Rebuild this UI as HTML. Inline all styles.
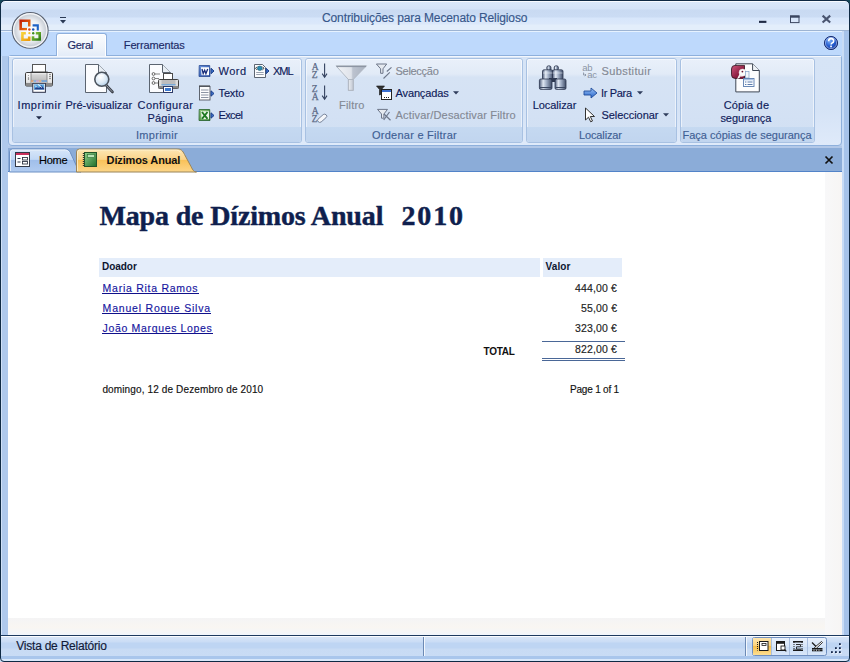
<!DOCTYPE html>
<html><head><meta charset="utf-8">
<style>
*{margin:0;padding:0;box-sizing:border-box}
html,body{width:850px;height:662px;overflow:hidden;background:#16495a}
body{position:relative;font-family:"Liberation Sans",sans-serif;font-size:11px;color:#1c2a66}
.a{position:absolute}
.t{position:absolute;white-space:pre;line-height:1;z-index:5;-webkit-text-stroke:0.15px currentColor}
svg{position:absolute;overflow:visible}
#frame{left:0;top:0;width:850px;height:662px;background:linear-gradient(90deg,#d0e1f7 1px,#d0e1f7 2px,#afc9ec 2px,#afc9ec 8px,#b9d0ee 8px,#b9d0ee 842px,#c8dcf6 842px,#c8dcf6 844px,#a6c3ea 844px);border-radius:7px 7px 0 0}
#frameo{left:0;top:0;width:850px;height:662px;border:1px solid #0f2a44;border-radius:5px 5px 4px 4px}
#title{left:1px;top:1px;width:848px;height:29px;border-radius:4px 4px 0 0;background:linear-gradient(#f8fbff 0,#f8fbff 1px,#dae8fa 1px,#d4e3f7 8px,#c9daf2 9px,#cbdcf4 16px,#d7e6fb 17px,#dbe8fa 23px,#e3eefb 24px,#e3eefb 29px)}
#titleline{left:1px;top:30px;width:848px;height:1px;background:#9db4d3}
#tabrow{left:1px;top:31px;width:841px;height:25px;background:#bed9fc;border-top:1px solid #e6f2ff}
#ribbon{left:8px;top:55px;width:834px;height:91px;background:linear-gradient(#d6e4f6 0,#d5e3f6 60%,#dfeafa 100%);border:1px solid #8eb0dc;border-radius:3px 3px 4px 4px}
#ribin{left:9px;top:56px;width:832px;height:1px;background:#f3f7fd}
.grp{position:absolute;top:58px;height:85px;border:1px solid #a8c1e2;border-radius:3px;background:linear-gradient(#e9f0fa 0,#e2ebf7 18%,#d6e3f4 22%,#d3e1f4 70%,#d0dff2 100%)}
.grp:before{content:"";position:absolute;left:0;top:0;right:0;bottom:0;border:1px solid rgba(255,255,255,.55);border-radius:2px}
.grp .lbl{position:absolute;left:0;right:0;bottom:0;height:15px;background:linear-gradient(#c5d9f1,#c1d5ef);border-radius:0 0 2px 2px}
#doctabs{left:8px;top:146px;width:834px;height:26px;background:#8bacd8;border-bottom:1px solid #5283c8}
#doctabsTop{left:8px;top:146px;width:834px;height:2px;background:#b2c8e8}
#content{left:8px;top:172px;width:817px;height:446px;background:#fff}
#rgray{left:825px;top:172px;width:17px;height:463px;background:linear-gradient(90deg,#f8f8f9,#f7f5f4)}
#bgray{left:8px;top:618px;width:817px;height:17px;background:linear-gradient(#f4f4f5 0,#f9f6f2 55%,#f1f6fc 100%)}
#status{left:1px;top:635px;width:848px;height:26px;border-radius:0 0 3px 3px;border-top:1px solid #1c3a60;background:linear-gradient(#fafcff 0,#fafcff 1px,#d6e5f8 1px,#cadcf5 6px,#bed5f3 7px,#bed5f3 12px,#c8dbf4 13px,#c9dcf5 20px,#a9c6ec 20px,#a9c6ec 23px,#d9e8fa 23px,#d9e8fa 25px,#0f2c4c 25px)}
</style></head><body>
<div id="frame" class="a"></div>
<div id="title" class="a"></div>
<div id="titleline" class="a"></div>
<div id="tabrow" class="a"></div>
<div id="ribbon" class="a"></div>
<div id="ribin" class="a"></div>
<div id="doctabs" class="a"></div>
<div id="doctabsTop" class="a"></div>
<div id="content" class="a"></div>
<div id="rgray" class="a"></div>
<div id="bgray" class="a"></div>
<div id="status" class="a"></div>
<div id="frameo" class="a"></div>
<div class="t" style="left:322.00px;top:12px;font-size:12px;color:#37578a;font-weight:normal;font-family:'Liberation Sans';letter-spacing:-0.111px;">Contribuições para Mecenato Religioso</div>
<div class="a" style="left:56px;top:33px;width:51px;height:23px;border:1px solid #8fb0dc;border-bottom:none;border-radius:3px 3px 0 0;background:linear-gradient(#fafcfe 0,#eff4fa 60%,#e3ecf8 100%);box-shadow:inset 1px 1px 0 #fff,inset -1px 0 0 #fff"></div>
<div class="t" style="left:67.60px;top:40px;font-size:11px;color:#1c2a66;font-weight:normal;font-family:'Liberation Sans';letter-spacing:-0.350px;">Geral</div>
<div class="t" style="left:123.80px;top:40px;font-size:11px;color:#1c2a66;font-weight:normal;font-family:'Liberation Sans';letter-spacing:-0.130px;">Ferramentas</div>
<div class="grp" style="left:12px;width:290px"><div class="lbl"></div></div>
<div class="grp" style="left:305px;width:218px"><div class="lbl"></div></div>
<div class="grp" style="left:526px;width:151px"><div class="lbl"></div></div>
<div class="grp" style="left:680px;width:135px"><div class="lbl"></div></div>
<div class="t" style="left:136.00px;top:130px;font-size:11px;color:#3f5f94;font-weight:normal;font-family:'Liberation Sans';letter-spacing:0.286px;">Imprimir</div>
<div class="t" style="left:372.00px;top:130px;font-size:11px;color:#3f5f94;font-weight:normal;font-family:'Liberation Sans';letter-spacing:0.250px;">Ordenar e Filtrar</div>
<div class="t" style="left:579.00px;top:130px;font-size:11px;color:#3f5f94;font-weight:normal;font-family:'Liberation Sans';letter-spacing:-0.125px;">Localizar</div>
<div class="t" style="left:682.50px;top:130px;font-size:11px;color:#3f5f94;font-weight:normal;font-family:'Liberation Sans';letter-spacing:0.000px;">Faça cópias de segurança</div>
<div class="t" style="left:17.50px;top:100px;font-size:11px;color:#0f1b5a;font-weight:normal;font-family:'Liberation Sans';letter-spacing:0.571px;">Imprimir</div>
<div class="t" style="left:65.50px;top:100px;font-size:11px;color:#0f1b5a;font-weight:normal;font-family:'Liberation Sans';letter-spacing:0.000px;">Pré-visualizar</div>
<div class="t" style="left:137.50px;top:100px;font-size:11px;color:#0f1b5a;font-weight:normal;font-family:'Liberation Sans';letter-spacing:0.444px;">Configurar</div>
<div class="t" style="left:147.50px;top:113px;font-size:11px;color:#0f1b5a;font-weight:normal;font-family:'Liberation Sans';letter-spacing:0.200px;">Página</div>
<div class="t" style="left:218.50px;top:66px;font-size:11px;color:#0f1b5a;font-weight:normal;font-family:'Liberation Sans';letter-spacing:0.500px;">Word</div>
<div class="t" style="left:218.50px;top:88px;font-size:11px;color:#0f1b5a;font-weight:normal;font-family:'Liberation Sans';letter-spacing:-0.125px;">Texto</div>
<div class="t" style="left:218.50px;top:110px;font-size:11px;color:#0f1b5a;font-weight:normal;font-family:'Liberation Sans';letter-spacing:-0.625px;">Excel</div>
<div class="t" style="left:273.00px;top:66px;font-size:11px;color:#0f1b5a;font-weight:normal;font-family:'Liberation Sans';letter-spacing:-1.000px;">XML</div>
<div class="t" style="left:339.00px;top:100px;font-size:11px;color:#838994;font-weight:normal;font-family:'Liberation Sans';letter-spacing:0.200px;">Filtro</div>
<div class="t" style="left:395.50px;top:66px;font-size:11px;color:#838994;font-weight:normal;font-family:'Liberation Sans';letter-spacing:-0.286px;">Selecção</div>
<div class="t" style="left:395.50px;top:88px;font-size:11px;color:#0f1b5a;font-weight:normal;font-family:'Liberation Sans';letter-spacing:-0.125px;">Avançadas</div>
<div class="t" style="left:395.50px;top:110px;font-size:11px;color:#838994;font-weight:normal;font-family:'Liberation Sans';letter-spacing:0.167px;">Activar/Desactivar Filtro</div>
<div class="t" style="left:532.70px;top:100px;font-size:11px;color:#0f1b5a;font-weight:normal;font-family:'Liberation Sans';letter-spacing:-0.050px;">Localizar</div>
<div class="t" style="left:601.50px;top:66px;font-size:11px;color:#838994;font-weight:normal;font-family:'Liberation Sans';letter-spacing:0.389px;">Substituir</div>
<div class="t" style="left:601.00px;top:88px;font-size:11px;color:#0f1b5a;font-weight:normal;font-family:'Liberation Sans';letter-spacing:-0.333px;">Ir Para</div>
<div class="t" style="left:601.50px;top:110px;font-size:11px;color:#0f1b5a;font-weight:normal;font-family:'Liberation Sans';letter-spacing:-0.050px;">Seleccionar</div>
<div class="t" style="left:723.70px;top:100px;font-size:11px;color:#0f1b5a;font-weight:normal;font-family:'Liberation Sans';letter-spacing:0.186px;">Cópia de</div>
<div class="t" style="left:720.40px;top:113px;font-size:11px;color:#0f1b5a;font-weight:normal;font-family:'Liberation Sans';letter-spacing:-0.050px;">segurança</div>
<div class="t" style="left:38.90px;top:155px;font-size:11px;color:#000;font-weight:normal;font-family:'Liberation Sans';letter-spacing:-0.200px;">Home</div>
<div class="t" style="left:106.60px;top:155px;font-size:11px;color:#101010;font-weight:bold;font-family:'Liberation Sans';letter-spacing:-0.133px;-webkit-text-stroke:0">Dízimos Anual</div>
<div class="t" style="left:99.40px;top:202px;font-size:28px;color:#0f1f4e;font-weight:bold;font-family:'Liberation Serif';letter-spacing:-0.150px;-webkit-text-stroke:0.45px currentColor">Mapa de Dízimos Anual</div>
<div class="t" style="left:401.50px;top:202px;font-size:28px;color:#0f1f4e;font-weight:bold;font-family:'Liberation Serif';letter-spacing:1.833px;-webkit-text-stroke:0.45px currentColor">2010</div>
<div class="a" style="left:99px;top:258px;width:441px;height:19px;background:#e4edfa"></div>
<div class="a" style="left:543px;top:258px;width:79px;height:19px;background:#e4edfa"></div>
<div class="t" style="left:102.00px;top:262px;font-size:10px;color:#0d1530;font-weight:bold;font-family:'Liberation Sans';letter-spacing:-0.040px;-webkit-text-stroke:0">Doador</div>
<div class="t" style="left:545.60px;top:262px;font-size:10px;color:#0d1530;font-weight:bold;font-family:'Liberation Sans';letter-spacing:0.100px;-webkit-text-stroke:0">Valor</div>
<div class="t" style="left:102.60px;top:283px;font-size:10.5px;color:#1616a0;font-weight:normal;font-family:'Liberation Sans';letter-spacing:0.733px;">Maria Rita Ramos</div>
<div class="a" style="left:102px;top:293px;width:97px;height:1px;background:#10108a"></div>
<div class="t" style="left:102.60px;top:303px;font-size:10.5px;color:#1616a0;font-weight:normal;font-family:'Liberation Sans';letter-spacing:0.794px;">Manuel Roque Silva</div>
<div class="a" style="left:102px;top:313px;width:109px;height:1px;background:#10108a"></div>
<div class="t" style="left:102.60px;top:323px;font-size:10.5px;color:#1616a0;font-weight:normal;font-family:'Liberation Sans';letter-spacing:0.659px;">João Marques Lopes</div>
<div class="a" style="left:102px;top:333px;width:111px;height:1px;background:#10108a"></div>
<div class="t" style="left:575.00px;top:283px;font-size:10.5px;color:#222;font-weight:normal;font-family:'Liberation Sans';letter-spacing:0.143px;">444,00 €</div>
<div class="t" style="left:581.00px;top:303px;font-size:10.5px;color:#222;font-weight:normal;font-family:'Liberation Sans';letter-spacing:0.167px;">55,00 €</div>
<div class="t" style="left:575.00px;top:323px;font-size:10.5px;color:#222;font-weight:normal;font-family:'Liberation Sans';letter-spacing:0.143px;">323,00 €</div>
<div class="a" style="left:542px;top:341px;width:83px;height:1px;background:#4a6797"></div>
<div class="t" style="left:575.00px;top:344px;font-size:10.5px;color:#222;font-weight:normal;font-family:'Liberation Sans';letter-spacing:0.143px;">822,00 €</div>
<div class="t" style="left:483.60px;top:347px;font-size:10px;color:#111;font-weight:bold;font-family:'Liberation Sans';letter-spacing:-0.300px;-webkit-text-stroke:0">TOTAL</div>
<div class="a" style="left:542px;top:358px;width:83px;height:1px;background:#4a6797"></div>
<div class="a" style="left:542px;top:360px;width:83px;height:1px;background:#4a6797"></div>
<div class="t" style="left:102.40px;top:385px;font-size:10px;color:#111;font-weight:normal;font-family:'Liberation Sans';letter-spacing:0.133px;">domingo, 12 de Dezembro de 2010</div>
<div class="t" style="left:570.00px;top:385px;font-size:10px;color:#111;font-weight:normal;font-family:'Liberation Sans';letter-spacing:-0.200px;">Page 1 of 1</div>
<div class="t" style="left:16.30px;top:640px;font-size:12px;color:#121a38;font-weight:normal;font-family:'Liberation Sans';letter-spacing:-0.235px;">Vista de Relatório</div>
<svg style="left:0;top:0" width="60" height="60" viewBox="0 0 60 60">
<defs>
<radialGradient id="ob" cx="50%" cy="50%" r="50%"><stop offset="0" stop-color="#ffffff"/><stop offset="0.55" stop-color="#f1f3f6"/><stop offset="0.85" stop-color="#cdd2d9"/><stop offset="1" stop-color="#eceff3"/></radialGradient>
<linearGradient id="lr" x1="0" y1="0" x2="1" y2="1"><stop offset="0" stop-color="#c2210a"/><stop offset="1" stop-color="#f07a10"/></linearGradient>
<linearGradient id="ly" x1="0" y1="0" x2="1" y2="1"><stop offset="0" stop-color="#f7d23a"/><stop offset="1" stop-color="#ef9a0c"/></linearGradient>
<linearGradient id="lg" x1="0" y1="0" x2="1" y2="1"><stop offset="0" stop-color="#8cc63a"/><stop offset="1" stop-color="#2f7d16"/></linearGradient>
</defs>
<circle cx="30.2" cy="30.4" r="17.9" fill="url(#ob)" stroke="#5b6372" stroke-width="1.1"/>
<circle cx="30.2" cy="30.4" r="16.7" fill="none" stroke="#ffffff" stroke-width="0.9" opacity=".85"/>
<path d="M27 29 H20.7 V20.7 H29.2 V26.6" fill="none" stroke="url(#lr)" stroke-width="2.6"/>
<rect x="22" y="22" width="5.9" height="5.7" fill="#dff0fb"/>
<path d="M32.6 25.4 H37.8 V30.6" fill="none" stroke="#1f63c6" stroke-width="2.1"/>
<path d="M25.8 33.2 H22.4 V39.7 H29.2 V36.4" fill="none" stroke="url(#ly)" stroke-width="2.6"/>
<path d="M35.8 33.2 H39.7 V39.5 H33 V36.2" fill="none" stroke="url(#lg)" stroke-width="2.6"/>
<circle cx="29.4" cy="29.5" r="1.25" fill="#d8401a"/>
<circle cx="33.2" cy="29.5" r="1.25" fill="#1b55b8"/>
<circle cx="29.4" cy="33.2" r="1.15" fill="#f0c030"/>
<circle cx="33.2" cy="33.2" r="1.2" fill="#3f8e20"/>
</svg>
<svg style="left:59px;top:16px" width="10" height="10" viewBox="0 0 10 10"><rect x="1" y="1" width="6" height="1" fill="#2b3a55"/><path d="M1 4 h6 l-3 3.5 z" fill="#2b3a55"/></svg>
<svg style="left:755px;top:12px" width="80" height="14" viewBox="0 0 80 14"><rect x="4" y="8.8" width="7.4" height="2.1" fill="#1f2a44"/><rect x="35.5" y="4" width="8.5" height="6.6" fill="none" stroke="#3b4660" stroke-width="1"/><rect x="35" y="3.5" width="9.5" height="2.2" fill="#3b4660"/><path d="M67.6 3.6 l7.6 6.9 M75.2 3.6 l-7.6 6.9" stroke="#4a5570" stroke-width="2.1"/></svg>
<svg style="left:822px;top:34px" width="18" height="18" viewBox="0 0 18 18">
<defs><radialGradient id="hp" cx="40%" cy="35%" r="70%"><stop offset="0" stop-color="#7fb0f5"/><stop offset=".5" stop-color="#2a62d4"/><stop offset="1" stop-color="#14349a"/></radialGradient></defs>
<circle cx="9" cy="9" r="6.6" fill="url(#hp)" stroke="#1b2f70" stroke-width="1"/>
<circle cx="9" cy="9" r="5.6" fill="none" stroke="#fff" stroke-width=".7" opacity=".6"/>
<path d="M6.6 7.2 q0 -2.6 2.5 -2.6 q2.6 0 2.6 2.3 q0 1.4 -1.6 2.1 q-0.9 0.4 -0.9 1.6" fill="none" stroke="#fff" stroke-width="1.6"/>
<rect x="8.2" y="11.6" width="1.7" height="1.7" fill="#fff"/>
</svg>
<svg style="left:22px;top:61px" width="34" height="34" viewBox="22 61 34 34">
<defs>
<linearGradient id="pb" x1="0" y1="0" x2="0" y2="1"><stop offset="0" stop-color="#f0f0f0"/><stop offset=".25" stop-color="#d4d4d4"/><stop offset=".75" stop-color="#c4c4c4"/><stop offset="1" stop-color="#b0b0b0"/></linearGradient>
<linearGradient id="ps" x1="0" y1="0" x2="0" y2="1"><stop offset="0" stop-color="#fafafa"/><stop offset=".7" stop-color="#e6e6e6"/><stop offset="1" stop-color="#a8a8a8"/></linearGradient>
</defs>
<rect x="32.5" y="64.5" width="13" height="8" fill="#fdfdfd" stroke="#555"/>
<path d="M31 71.5 h16.5 l0.7 1 h-18 z" fill="#444"/>
<rect x="25.5" y="72.5" width="27" height="13.5" rx="1.2" fill="url(#ps)" stroke="#3a3a3a"/>
<rect x="31" y="73" width="16" height="8" fill="url(#pb)"/>
<path d="M31 73 v12.5 M47 73 v12.5" stroke="#7a7a7a" stroke-width=".8"/>
<rect x="31" y="80.3" width="2.6" height="1.6" fill="#e0a070"/><rect x="33.6" y="80.3" width="2.6" height="1.6" fill="#7fb0e0"/><rect x="36.2" y="80.3" width="2.6" height="1.6" fill="#c9a0d0"/><rect x="38.8" y="80.3" width="2.6" height="1.6" fill="#e0b080"/><rect x="41.4" y="80.3" width="5.6" height="1.6" fill="#6aa0d8"/>
<rect x="25.8" y="83" width="26.4" height="2.8" fill="#8c8c8c"/>
<circle cx="28.5" cy="75.5" r=".6" fill="#999"/><circle cx="28.5" cy="77.5" r=".6" fill="#999"/><circle cx="28.5" cy="79" r=".7" fill="#666"/>
<circle cx="50" cy="74.5" r=".7" fill="#555"/><circle cx="50" cy="76.5" r=".7" fill="#555"/><circle cx="50" cy="78.5" r=".7" fill="#555"/>
<rect x="32.8" y="83.3" width="12.6" height="9" fill="#fff" stroke="#2a2f45"/>
<rect x="34" y="84.3" width="10.2" height="5.2" fill="#5aa6e0"/>
<path d="M34 89.5 l3 -3 l2 1.8 l2.3 -3 l3 3.5 v0.7 z" fill="#1f3f8a"/>
<path d="M35 85.5 l2 2 M38 84.5 l4 3" stroke="#fff" stroke-width=".9"/>
</svg>
<svg style="left:83px;top:62px" width="34" height="34" viewBox="0 0 34 34">
<defs><radialGradient id="mg" cx="40%" cy="35%" r="70%"><stop offset="0" stop-color="#ffffff"/><stop offset=".6" stop-color="#dbe9f5"/><stop offset="1" stop-color="#a9c8e4"/></radialGradient></defs>
<path d="M2.5 2.5 h13 l8 8 v20 h-21 z" fill="#fbfcfe" stroke="#5b6470"/>
<path d="M15.5 2.5 v8 h8" fill="#e8eef4" stroke="#5b6470"/>
<line x1="22.5" y1="22.5" x2="29.5" y2="30" stroke="#3a3f48" stroke-width="2.6" stroke-linecap="round"/>
<line x1="22.5" y1="22.5" x2="29" y2="29.5" stroke="#9aa1ab" stroke-width="1" stroke-linecap="round"/>
<circle cx="18.8" cy="17.3" r="7" fill="url(#mg)" stroke="#4c545e" stroke-width="1.6"/>
<path d="M15 15 q3 -3 6 -1" stroke="#fff" stroke-width="1" fill="none"/>
</svg>
<svg style="left:147px;top:62px" width="36" height="34" viewBox="0 0 36 34">
<path d="M2.5 2.5 h13 l8 8 v20 h-21 z" fill="#fbfcfe" stroke="#5b6470"/>
<path d="M15.5 2.5 v8 h8" fill="#e8eef4" stroke="#5b6470"/>
<circle cx="6.5" cy="12" r="1.4" fill="#fff" stroke="#555" stroke-width=".9"/>
<circle cx="6.5" cy="16.5" r="1.4" fill="#fff" stroke="#555" stroke-width=".9"/>
<circle cx="6.5" cy="21" r="1.4" fill="#fff" stroke="#555" stroke-width=".9"/>
<path d="M8 12 h5 M8 16.5 h4 M8 21 h3" stroke="#666" stroke-width=".8"/>
<rect x="16.5" y="11.5" width="9" height="7" fill="#fff" stroke="#4a4a4a"/>
<rect x="11.5" y="17.5" width="20" height="9" rx="1" fill="#dcdcdc" stroke="#3f3f3f"/>
<rect x="14.5" y="18" width="14" height="5" fill="#bdbdbd"/>
<rect x="14.5" y="22" width="14" height="1.5" fill="#7aaad8"/>
<rect x="11.5" y="24" width="20" height="2.5" fill="#8a8a8a"/>
<rect x="16.5" y="24.5" width="9" height="6" fill="#fff" stroke="#2d3a66"/>
<rect x="18" y="26" width="6" height="3" fill="#3d7ad0"/>
</svg>
<svg style="left:35.5px;top:115.5px" width="8" height="6" viewBox="0 0 8 6"><path d="M0 0.3 h6 l-3 3.3 z" fill="#1f2a48"/></svg>
<svg style="left:198px;top:64px" width="18" height="14" viewBox="0 0 18 14">
<defs><linearGradient id="wd" x1="0" y1="0" x2="1" y2="1"><stop offset="0" stop-color="#6d98e0"/><stop offset="1" stop-color="#1c3f9a"/></linearGradient></defs>
<path d="M1.2 1.5 h10.5 l0.3 11 h-11 z" fill="url(#wd)" stroke="#2a4a92" stroke-width=".8"/>
<path d="M3 3.2 h8 v8 h-7.5 z" fill="#fff"/>
<path d="M4 5 l1.2 4.6 l1.5 -3.3 l1.2 3.3 l1.8 -4.6" stroke="#1a2f7c" stroke-width="1.3" fill="none"/>
<path d="M13 4.3 l3 2.7 l-3 2.7 z" fill="#3c73d0" stroke="#1d3f86" stroke-width="1"/>
</svg>
<svg style="left:198px;top:84px" width="18" height="17" viewBox="0 0 18 17">
<rect x="1.5" y="2.5" width="10.5" height="13.5" fill="#fdfdfd" stroke="#50555f" stroke-width=".9"/>
<path d="M1.5 1.8 h10.5" stroke="#333" stroke-width="1.4" stroke-dasharray="1 1"/>
<path d="M3 6 h7.5 M3 8.5 h7.5 M3 11 h7.5 M3 13.5 h7.5" stroke="#7f8898" stroke-width=".9"/>
<path d="M13 6.8 l3 2.7 l-3 2.7 z" fill="#3c73d0" stroke="#1d3f86" stroke-width="1"/>
</svg>
<svg style="left:198px;top:108px" width="18" height="14" viewBox="0 0 18 14">
<defs><linearGradient id="xl" x1="0" y1="0" x2="1" y2="1"><stop offset="0" stop-color="#9ed08a"/><stop offset="1" stop-color="#2a7a24"/></linearGradient></defs>
<path d="M1.2 1.5 h10.5 l0.3 11 h-11 z" fill="url(#xl)" stroke="#24602a" stroke-width=".8"/>
<path d="M3 3.2 h8 v8 h-7.5 z" fill="#eef7ea"/>
<path d="M4 4 l5.5 6.8 M9.5 4 l-5.5 6.8" stroke="#1f7a22" stroke-width="1.9"/>
<path d="M13 4.8 l3 2.7 l-3 2.7 z" fill="#3c73d0" stroke="#1d3f86" stroke-width="1"/>
</svg>
<svg style="left:253px;top:63px" width="18" height="16" viewBox="0 0 18 16">
<path d="M1.5 1.5 h8 l3 3 v10 h-11 z" fill="#fbfcfd" stroke="#4c5562" stroke-width=".9"/>
<path d="M3.2 9.5 h7.5 M3.2 11.5 h7.5" stroke="#7f8898" stroke-width=".8"/>
<ellipse cx="6.8" cy="5.3" rx="2.4" ry="2.2" fill="#2a8bb0" stroke="#1b5c76" stroke-width=".6"/>
<path d="M2.5 5.3 l1.6 -1.6 M2.5 5.3 l1.6 1.6 M11 5.3 l-1.6 -1.6 M11 5.3 l-1.6 1.6" stroke="#222" stroke-width=".9"/>
<path d="M13 5.3 l3 2.7 l-3 2.7 z" fill="#3c73d0" stroke="#1d3f86" stroke-width="1"/>
</svg>
<svg style="left:311px;top:63px" width="18" height="16" viewBox="0 0 18 16"><text x="0.8" y="7.2" font-family="Liberation Serif" font-size="9.5" fill="#5a6985" stroke="#5a6985" stroke-width=".25">A</text><text x="0.8" y="14.8" font-family="Liberation Serif" font-size="9.5" fill="#5a6985" stroke="#5a6985" stroke-width=".25">Z</text><path d="M13.6 0.5 v13.5" stroke="#34425f" stroke-width="1.1"/><path d="M11.2 10.6 l2.4 3.6 l2.4 -3.6" stroke="#34425f" stroke-width="1.1" fill="none"/></svg>
<svg style="left:311px;top:85px" width="18" height="16" viewBox="0 0 18 16"><text x="0.8" y="7.2" font-family="Liberation Serif" font-size="9.5" fill="#5a6985" stroke="#5a6985" stroke-width=".25">Z</text><text x="0.8" y="14.8" font-family="Liberation Serif" font-size="9.5" fill="#5a6985" stroke="#5a6985" stroke-width=".25">A</text><path d="M13.6 0.5 v13.5" stroke="#34425f" stroke-width="1.1"/><path d="M11.2 10.6 l2.4 3.6 l2.4 -3.6" stroke="#34425f" stroke-width="1.1" fill="none"/></svg>
<svg style="left:311px;top:107px" width="18" height="16" viewBox="0 0 18 16"><text x="0.8" y="7.2" font-family="Liberation Serif" font-size="9.5" fill="#5a6985" stroke="#5a6985" stroke-width=".25">A</text><text x="0.8" y="14.8" font-family="Liberation Serif" font-size="9.5" fill="#5a6985" stroke="#5a6985" stroke-width=".25">Z</text><path d="M7 12.2 l5.2 -4.6 q1.6 -1.2 3.2 0.4 q1.2 1.4 -0.5 2.8 l-4.8 4.2 q-1.6 1.1 -3.1 -0.5 q-1 -1.2 0 -2.3 z" fill="#f4f6fa" stroke="#6a778e" stroke-width=".9"/></svg>
<svg style="left:330px;top:60px" width="42" height="34" viewBox="330 60 42 34">
<defs><linearGradient id="fn" x1="0" y1="0" x2="1" y2="0"><stop offset="0" stop-color="#f2f4f7"/><stop offset=".5" stop-color="#dfe3ea"/><stop offset=".55" stop-color="#bcc3cf"/><stop offset="1" stop-color="#a9b1bf"/></linearGradient>
<linearGradient id="fnk" x1="0" y1="0" x2="1" y2="0"><stop offset="0" stop-color="#e9ecf1"/><stop offset="1" stop-color="#c3c9d3"/></linearGradient></defs>
<path d="M336 65.8 h30.5 l-13.3 13.7 v10.8 h-4.8 v-10.8 z" fill="url(#fn)" stroke="#aeb5c0" stroke-width=".9" stroke-linejoin="round"/>
<rect x="348.4" y="79.5" width="4.8" height="10.8" fill="url(#fnk)" stroke="#aeb5c0" stroke-width=".9"/>
<path d="M336.5 66.5 h29.5" stroke="#8d95a3" stroke-width="1.2"/>
</svg>
<svg style="left:374px;top:61px" width="20" height="20" viewBox="374 61 20 20">
<path d="M376.4 64 h10.3 l-3.7 4.8 v4.5 h-2.4 v-4.5 z" fill="#e6eaf0" stroke="#6d7689" stroke-width="1" stroke-linejoin="round"/>
<path d="M391.5 67.3 l-4.7 4.2 M389.8 72.3 l-6.3 6.2" stroke="#6d7689" stroke-width="1.1"/>
</svg>
<svg style="left:376px;top:85px" width="17" height="16" viewBox="0 0 17 16">
<rect x="5.5" y="4.5" width="10" height="10" fill="#fff" stroke="#222"/>
<rect x="6" y="5" width="9" height="2" fill="#3a6fd0"/>
<path d="M8 12.5 h1 M10 12.5 h1 M12 12.5 h1" stroke="#222"/>
<path d="M0.5 1 h8 l-3 3.5 v4.5 l-2 1 v-5.5 z" fill="#333" stroke="#111" stroke-width=".6"/>
</svg>
<svg style="left:374px;top:105px" width="20" height="20" viewBox="374 105 20 20">
<path d="M377.5 109.4 h10 l-3.6 4.6 v4.2 h-2.4 v-4.2 z" fill="#e6eaf0" stroke="#6d7689" stroke-width="1" stroke-linejoin="round"/>
<path d="M384 114 l6.5 6.3 M389.5 112 l-5.8 8" stroke="#6d7689" stroke-width="1.2"/>
</svg>
<svg style="left:536px;top:63px" width="32" height="29" viewBox="536 63 32 29">
<defs><linearGradient id="bn" x1="0" y1="0" x2="1" y2="0"><stop offset="0" stop-color="#4c5a78"/><stop offset=".3" stop-color="#dfe7f2"/><stop offset=".55" stop-color="#a3b1c8"/><stop offset="1" stop-color="#3e4b66"/></linearGradient>
<linearGradient id="bv" x1="0" y1="0" x2="0" y2="1"><stop offset="0" stop-color="#fff" stop-opacity=".35"/><stop offset="1" stop-color="#000" stop-opacity=".15"/></linearGradient></defs>
<rect x="546.8" y="65.8" width="4.2" height="4.6" rx="1.8" fill="url(#bn)" stroke="#2b354c" stroke-width=".8"/>
<rect x="554.2" y="65.8" width="4.2" height="4.6" rx="1.8" fill="url(#bn)" stroke="#2b354c" stroke-width=".8"/>
<rect x="542.5" y="69.8" width="10.5" height="9.8" rx="1.5" fill="url(#bn)" stroke="#2b354c" stroke-width=".8"/>
<rect x="552.5" y="69.8" width="10.5" height="9.8" rx="1.5" fill="url(#bn)" stroke="#2b354c" stroke-width=".8"/>
<rect x="549" y="78" width="8" height="4" fill="#2f3a52"/>
<rect x="539.4" y="79" width="12.6" height="10.4" rx="1.5" fill="url(#bn)" stroke="#2b354c" stroke-width=".8"/>
<rect x="555" y="79" width="11" height="10.4" rx="1.5" fill="url(#bn)" stroke="#2b354c" stroke-width=".8"/>
<path d="M540 87.5 h11.5 M555.5 87.5 h10" stroke="#3b4862" stroke-width="1.2"/>
<path d="M543 73 h9.5 M553 73 h9.5" stroke="#f2f6fb" stroke-width=".8" opacity=".7"/>
</svg>
<svg style="left:580px;top:62px" width="20" height="18" viewBox="580 62 20 18">
<text x="582.3" y="71.3" font-family="Liberation Sans" font-size="9.5" fill="#8b95a5" letter-spacing="-.3">ab</text>
<text x="587.2" y="77.8" font-family="Liberation Sans" font-size="9.5" fill="#8b95a5" letter-spacing="-.3">ac</text>
<path d="M583.5 72.5 v2.5 h2.5 M584.8 73.8 l1.2 1.2 l-1.2 1.2" stroke="#8b95a5" stroke-width=".9" fill="none"/>
</svg>
<svg style="left:583px;top:87px" width="16" height="12" viewBox="0 0 16 12">
<defs><linearGradient id="ip" x1="0" y1="0" x2="0" y2="1"><stop offset="0" stop-color="#9cc4f7"/><stop offset="1" stop-color="#2563c9"/></linearGradient></defs>
<path d="M1 4 h7 v-3 l6 5 l-6 5 v-3 h-7 z" fill="url(#ip)" stroke="#1f4c9a" stroke-width=".9"/>
</svg>
<svg style="left:584px;top:107px" width="12" height="16" viewBox="0 0 12 16">
<path d="M1.5 1 v12 l3 -2.8 l2.2 4.6 l1.8 -0.8 l-2.2 -4.5 h4.2 z" fill="#fff" stroke="#333" stroke-width="1"/>
</svg>
<svg style="left:725px;top:60px" width="40" height="36" viewBox="725 60 40 36">
<defs><linearGradient id="ac" x1="0" y1="0" x2="1" y2="1"><stop offset="0" stop-color="#d0587e"/><stop offset=".6" stop-color="#8e1e42"/><stop offset="1" stop-color="#6a1230"/></linearGradient></defs>
<path d="M735.8 63.8 h16.8 l6.7 6.7 v21.4 h-23.5 z" fill="#fdfdfe" stroke="#3f4856" stroke-width="1"/>
<path d="M752.6 63.8 v6.7 h6.7" fill="#eef2f7" stroke="#3f4856" stroke-width="1"/>
<path d="M731.5 69 q0 -3.6 3.6 -3.6 h9.4 v13 h-9.4 q-3.6 0 -3.6 -3.6 z" fill="url(#ac)" stroke="#2b0f1a" stroke-width=".8"/>
<path d="M737 79 l3 -6 l4 3 z" fill="#fbfbfb"/>
<circle cx="742.6" cy="72.6" r="3.6" fill="#fbfbfb" stroke="#e2d3d9" stroke-width=".5"/>
<circle cx="742.4" cy="71.6" r=".9" fill="#6a1230"/>
<path d="M739.8 76.6 h4.2 v2 h-4.2 z" fill="#7a1838"/>
<rect x="745.5" y="71.5" width="3.5" height="6.5" fill="#f4f7fb" stroke="#7f9fc8" stroke-width=".7"/>
<rect x="743.5" y="78.5" width="10.5" height="8" fill="#fafcff" stroke="#5b7db0" stroke-width=".9"/>
<rect x="744" y="79" width="9.5" height="1.3" fill="#a9c1e3"/>
<path d="M745 82 h1.4 M747.5 82 h5 M745 84.5 h1.4 M747.5 84.5 h5" stroke="#4a6da3" stroke-width=".9"/>
</svg>
<svg style="left:452.5px;top:90.5px" width="7" height="5" viewBox="0 0 7 5"><path d="M0 0.2 h6 l-3 3.3 z" fill="#2f3d5c"/></svg>
<svg style="left:637px;top:90.5px" width="7" height="5" viewBox="0 0 7 5"><path d="M0 0.2 h6 l-3 3.3 z" fill="#2f3d5c"/></svg>
<svg style="left:662.5px;top:113px" width="7" height="5" viewBox="0 0 7 5"><path d="M0 0.2 h6 l-3 3.3 z" fill="#2f3d5c"/></svg>
<svg style="left:8px;top:146px" width="200" height="27" viewBox="0 0 200 27">
<defs>
<linearGradient id="ht" x1="0" y1="0" x2="0" y2="1"><stop offset="0" stop-color="#d8e7f9"/><stop offset=".45" stop-color="#c2d8f5"/><stop offset=".5" stop-color="#a0bfeb"/><stop offset="1" stop-color="#b2ccf0"/></linearGradient>
<linearGradient id="dt" x1="0" y1="0" x2="0" y2="1"><stop offset="0" stop-color="#fde7b5"/><stop offset=".45" stop-color="#fbd48a"/><stop offset=".5" stop-color="#f9c25a"/><stop offset="1" stop-color="#fcd689"/></linearGradient>
</defs>
<path d="M1.5 26 v-20 q0 -3 3 -3 h52 c3.5 0 5 1.5 6.5 5 l5.5 12 c1.5 4 2.5 5.5 4.5 6 z" fill="url(#ht)" stroke="#6c90c4" stroke-width="1"/>
<path d="M2.5 25 v-19 q0 -2 2 -2 h53 q2 0 4 2.5" fill="none" stroke="#f2f7fd" stroke-width="1" opacity=".8"/>
<path d="M68.5 26 v-20 q0 -3 3 -3 h98 c3.5 0 5 1.5 7 5.5 l6.5 12 c2 4 3 5.5 5.5 5.5 z" fill="url(#dt)" stroke="#9a8458" stroke-width="1"/>
<path d="M69.5 25 v-19 q0 -2 2 -2 h97 q2 0 4 2.5" fill="none" stroke="#fff6dc" stroke-width="1" opacity=".7"/>
</svg>
<svg style="left:14px;top:151px" width="17" height="17" viewBox="0 0 17 17">
<rect x="1.5" y="1.5" width="14" height="14" fill="#fff" stroke="#333a48"/>
<rect x="2" y="2" width="13" height="2" fill="#c9305c"/>
<path d="M3.5 7.5 h3 M3.5 11 h3" stroke="#333a48" stroke-width="1"/>
<rect x="8.5" y="6.5" width="5" height="2.5" fill="#fff" stroke="#333a48" stroke-width=".9"/>
<rect x="8.5" y="10.5" width="5" height="2.5" fill="#fff" stroke="#333a48" stroke-width=".9"/>
</svg>
<svg style="left:82px;top:151px" width="16" height="17" viewBox="0 0 16 17">
<defs><linearGradient id="rg" x1="0" y1="0" x2="1" y2="1"><stop offset="0" stop-color="#8fd08a"/><stop offset="1" stop-color="#1f6e2a"/></linearGradient></defs>
<rect x="2.5" y="1.5" width="12" height="14" fill="url(#rg)" stroke="#23552a"/>
<rect x="5.5" y="3.5" width="7" height="3" fill="#b9e4b5" stroke="#2f6f36" stroke-width=".6"/>
<path d="M1.5 2 v13" stroke="#333" stroke-width="1.4" stroke-dasharray="1 1"/>
</svg>
<svg style="left:824px;top:155px" width="10" height="10" viewBox="0 0 10 10"><path d="M1.5 1.5 l7 7 M8.5 1.5 l-7 7" stroke="#111" stroke-width="1.7"/></svg>
<div class="a" style="left:423px;top:637px;width:1px;height:19px;background:#6c8ab5"></div>
<div class="a" style="left:424px;top:637px;width:1px;height:19px;background:#f2f7fd"></div>
<div class="a" style="left:745px;top:637px;width:1px;height:19px;background:#6c8ab5"></div>
<div class="a" style="left:746px;top:637px;width:1px;height:19px;background:#f2f7fd"></div>
<svg style="left:750px;top:635px" width="80" height="24" viewBox="750 635 80 24">
<defs>
<linearGradient id="vb" x1="0" y1="0" x2="0" y2="1"><stop offset="0" stop-color="#eaf2fc"/><stop offset=".5" stop-color="#d6e5f8"/><stop offset=".52" stop-color="#c8dcf5"/><stop offset="1" stop-color="#dbe8f9"/></linearGradient>
<linearGradient id="vo" x1="0" y1="0" x2="0" y2="1"><stop offset="0" stop-color="#fde6b0"/><stop offset=".45" stop-color="#fbd27a"/><stop offset=".5" stop-color="#f8bf4a"/><stop offset="1" stop-color="#fcdf95"/></linearGradient>
</defs>
<rect x="752.5" y="637.5" width="74" height="18" rx="2" fill="url(#vb)" stroke="#6f8fc0"/>
<rect x="753" y="638" width="18" height="17" fill="url(#vo)"/>
<path d="M771.5 638 v17 M789.5 638 v17 M807.5 638 v17" stroke="#a9bfdf"/>
<rect x="759.5" y="641.5" width="8.5" height="9" fill="#fff" stroke="#1a1a1a"/>
<path d="M757.5 642 v8.5" stroke="#1a1a1a" stroke-dasharray="1 1"/>
<rect x="762" y="643.5" width="4" height="2" fill="#fff" stroke="#1a1a1a" stroke-width=".8"/>
<rect x="776.5" y="641.5" width="8" height="9" fill="#fff" stroke="#1a1a1a"/>
<rect x="777" y="642" width="7" height="1.8" fill="#1a1a1a"/>
<rect x="781" y="646" width="4" height="4" fill="#fff" stroke="#1a1a1a" stroke-width=".9"/>
<path d="M784.5 649.5 l1.8 1.8" stroke="#1a1a1a" stroke-width="1.2"/>
<path d="M793 641.8 h10 M793 650.2 h10" stroke="#1a1a1a" stroke-width="1.5"/>
<path d="M794 642 v8 M802 642 v8" stroke="#1a1a1a" stroke-width="1" stroke-dasharray="1 1"/>
<path d="M796 644.5 h4.5 v2.3 h-4 v2.3 h4.5" stroke="#1a1a1a" stroke-width=".9" fill="none"/>
<path d="M812 642.5 l4.5 4.5" stroke="#1a1a1a" stroke-width="1.2" fill="none"/>
<path d="M814.5 647.5 l7 -6 l1 1 l-6.5 6.2 z" fill="#fff" stroke="#1a1a1a" stroke-width=".9"/>
<path d="M812 648.5 h10.5" stroke="#1a1a1a" stroke-width="1"/>
<rect x="812" y="649.3" width="10.5" height="2" fill="#1a1a1a"/>
<path d="M814 649.5 v1.6 M816.5 649.5 v1.6 M819 649.5 v1.6" stroke="#fff" stroke-width=".6"/>
</svg>
<svg style="left:830px;top:642px" width="14" height="14" viewBox="0 0 14 14"><rect x="10" y="2.2" width="1.6" height="1.6" fill="#f4f8fd"/><rect x="9" y="1.2" width="1.8" height="1.8" fill="#13264a"/><rect x="10" y="6.2" width="1.6" height="1.6" fill="#f4f8fd"/><rect x="9" y="5.2" width="1.8" height="1.8" fill="#13264a"/><rect x="6" y="6.2" width="1.6" height="1.6" fill="#f4f8fd"/><rect x="5" y="5.2" width="1.8" height="1.8" fill="#13264a"/><rect x="10" y="10.2" width="1.6" height="1.6" fill="#f4f8fd"/><rect x="9" y="9.2" width="1.8" height="1.8" fill="#13264a"/><rect x="6" y="10.2" width="1.6" height="1.6" fill="#f4f8fd"/><rect x="5" y="9.2" width="1.8" height="1.8" fill="#13264a"/><rect x="2" y="10.2" width="1.6" height="1.6" fill="#f4f8fd"/><rect x="1" y="9.2" width="1.8" height="1.8" fill="#13264a"/></svg>
</body></html>
